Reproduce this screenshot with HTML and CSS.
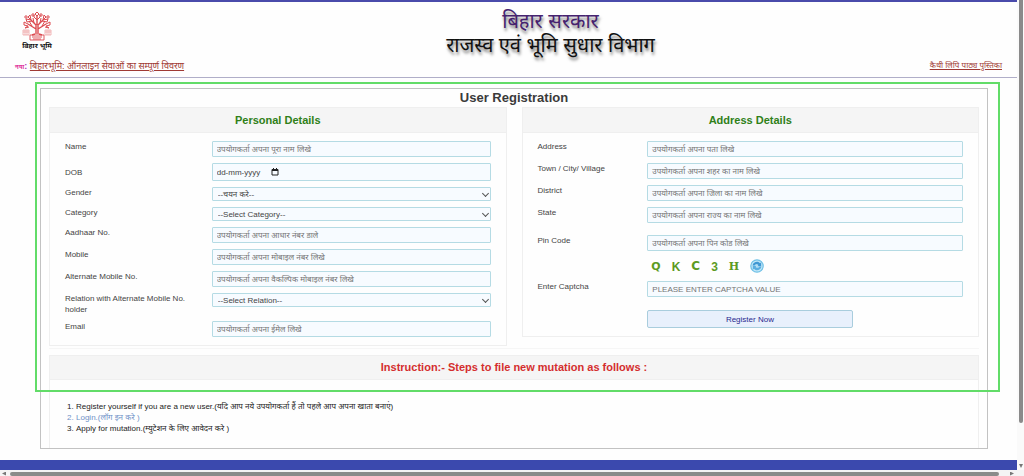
FILE: index.html
```html
<!DOCTYPE html>
<html lang="hi">
<head>
    <meta charset="UTF-8">
    <meta name="viewport" content="width=device-width, initial-scale=1.0">
    <title>बिहारभूमि - User Registration</title>
    <link rel="stylesheet" href="styles.css">
</head>
<body>
    <div class="viewport">
        <div class="page">
            <header class="header">
                <div class="logo">
                    <svg class="logo-tree" viewBox="0 0 30 30" fill="none" stroke="#dc4a50" stroke-width="1">
                        <path d="M14 23V14L9 9M16 23V14l5-5M15 14V5M14 18L6 13M16 18l8-5M13 23l-3 1M17 23l3 1" stroke-width="1.4"/>
                        <path d="M9 9L8 4l-2 2 3 3-5-1 1 3 5-1M21 9l1-5 2 2-3 3 5-1-1 3-5-1M15 5l-2-2 2-2 2 2-2 2M15 9l-3-3v-2M15 9l3-3V4M6 13l-4-2v3l4 1-3 2 4-1M24 13l4-2v3l-4 1 3 2-4-1M12 12L11 7M18 12l1-5M10 15l-3-5M20 15l3-5"/>
                        <circle cx="11" cy="4" r="1.2"/>
                        <circle cx="19" cy="4" r="1.2"/>
                        <circle cx="4" cy="6" r="1.2"/>
                        <circle cx="26" cy="6" r="1.2"/>
                        <path d="M1 19h6v5H1zM23 19h6v5h-6zM1 21h6M23 21h6M3 19v5M5 19v5M25 19v5M27 19v5" stroke="#ec9a9c" stroke-width=".7"/>
                        <path d="M8 24h14v5H8zM10 26h10M11 28h8" stroke-width=".9"/>
                    </svg>
                    <span class="logo-text">बिहार भूमि</span>
                </div>
                <div class="title">
                    <div class="title-gov">बिहार सरकार</div>
                    <div class="title-dept">राजस्व एवं भूमि सुधार विभाग</div>
                </div>
                <div class="notice">
                    <span class="new">नया</span><span class="new-colon">:</span>
                    <a href="#">बिहारभूमि: ऑनलाइन सेवाओं का सम्पूर्ण विवरण</a>
                </div>
                <a class="book" href="#">कैथी लिपि पाठ्य पुस्तिका</a>
            </header>

            <main class="main">
                <div class="highlight"></div>
                <div class="box">
                    <h1>User Registration</h1>
                    <form class="cards">
                        <section class="card">
                            <h2>Personal Details</h2>
                            <div class="fields">
                                <div class="row">
                                    <label for="name">Name</label>
                                    <input id="name" type="text" placeholder="उपयोगकर्ता अपना पूरा नाम लिखे">
                                </div>
                                <div class="row date">
                                    <label for="dob">DOB</label>
                                    <div class="date-box">
                                        <input id="dob" type="text" placeholder="dd-mm-yyyy">
                                        <button type="button" class="calendar" aria-label="Choose date">
                                            <svg viewBox="0 0 8 8"><path d="M1 1.5h6v5.5H1z" fill="none" stroke="#222"/><path d="M1 1h6v2H1zM2 0h1v1H2zM5 0h1v1H5z" fill="#222"/></svg>
                                        </button>
                                    </div>
                                </div>
                                <div class="row">
                                    <label for="gender">Gender</label>
                                    <div class="select-box"><select id="gender"><option>--चयन करे--</option></select></div>
                                </div>
                                <div class="row">
                                    <label for="category">Category</label>
                                    <div class="select-box"><select id="category"><option>--Select Category--</option></select></div>
                                </div>
                                <div class="row">
                                    <label for="aadhaar">Aadhaar No.</label>
                                    <input id="aadhaar" type="text" placeholder="उपयोगकर्ता अपना आधार नंबर डाले">
                                </div>
                                <div class="row">
                                    <label for="mobile">Mobile</label>
                                    <input id="mobile" type="text" placeholder="उपयोगकर्ता अपना मोबाइल नंबर लिखे">
                                </div>
                                <div class="row">
                                    <label for="alt-mobile">Alternate Mobile No.</label>
                                    <input id="alt-mobile" type="text" placeholder="उपयोगकर्ता अपना वैकल्पिक मोबाइल नंबर लिखे">
                                </div>
                                <div class="row">
                                    <label for="relation">Relation with Alternate Mobile No. holder</label>
                                    <div class="select-box"><select id="relation"><option>--Select Relation--</option></select></div>
                                </div>
                                <div class="row">
                                    <label for="email">Email</label>
                                    <input id="email" type="text" placeholder="उपयोगकर्ता अपना ईमेल लिखे">
                                </div>
                            </div>
                        </section>

                        <section class="card address">
                            <h2>Address Details</h2>
                            <div class="fields">
                                <div class="row">
                                    <label for="address">Address</label>
                                    <input id="address" type="text" placeholder="उपयोगकर्ता अपना पता लिखे">
                                </div>
                                <div class="row">
                                    <label for="town">Town / City/ Village</label>
                                    <input id="town" type="text" placeholder="उपयोगकर्ता अपना शहर का नाम लिखे">
                                </div>
                                <div class="row">
                                    <label for="district">District</label>
                                    <input id="district" type="text" placeholder="उपयोगकर्ता अपना जिला का नाम लिखे">
                                </div>
                                <div class="row state">
                                    <label for="state">State</label>
                                    <input id="state" type="text" placeholder="उपयोगकर्ता अपना राज्य का नाम लिखे">
                                </div>
                                <div class="row">
                                    <label for="pin">Pin Code</label>
                                    <input id="pin" type="text" placeholder="उपयोगकर्ता अपना पिन कोड लिखे">
                                </div>
                                <div class="row">
                                    <div class="captcha">
                                        <span class="thin">Q</span>
                                        <span class="low">K</span>
                                        <span class="wide">C</span>
                                        <span class="digit">3</span>
                                        <span class="serif">H</span>
                                        <button type="button" class="refresh" aria-label="Refresh captcha">
                                            <svg viewBox="0 0 14 14">
                                                <circle cx="7" cy="7" r="6.2" fill="#c4e8f8" stroke="#6fc0e6" stroke-width="1.2"/>
                                                <path d="M2.5 6.5C3 4 5 2.800 7 2.800c1.500 0 2.500.7 3 1.500l1.200-1v4H7.200l1.300-1.300C7.500 5 5.500 5 4.500 6.500z" fill="#3f97d3"/>
                                                <path d="M11.500 7.500C11 10 9 11.200 7 11.200c-1.500 0-2.500-.7-3-1.500l-1.200 1v-4h4L5.500 8c1 1 3 1 4-.5z" fill="#5aaee0"/>
                                            </svg>
                                        </button>
                                    </div>
                                </div>
                                <div class="row captcha-input">
                                    <label for="captcha">Enter Captcha</label>
                                    <input id="captcha" type="text" placeholder="PLEASE ENTER CAPTCHA VALUE">
                                </div>
                                <div class="row">
                                    <button type="submit" class="register">Register Now</button>
                                </div>
                            </div>
                        </section>
                    </form>

                    <section class="card instructions">
                        <h2>Instruction:- Steps to file new mutation as follows :</h2>
                        <ol>
                            <li>Register yourself if you are a new user.(यदि आप नये उपयोगकर्ता हैं तो पहले आप अपना खाता बनाएं)</li>
                            <li class="login"><a href="#">Login.(लॉग इन करे )</a></li>
                            <li>Apply for mutation.(म्युटेशन के लिए आवेदन करे )</li>
                        </ol>
                    </section>
                </div>
            </main>
            <footer class="footer"></footer>
        </div>
        <div class="scroll-y"><div class="thumb"></div><i class="arrow down"></i></div>
        <div class="scroll-x"><i class="arrow left"></i><div class="thumb"></div><i class="arrow right"></i></div>
    </div>
</body>
</html>
```

FILE: styles.css
```css
* {
    box-sizing: border-box;
}
body {
    margin: 0;
    background: #fefefe;
    color: #444;
    font-family: "Liberation Sans", "Noto Sans", "Noto Sans Devanagari", sans-serif;
    font-size: 8px;
    line-height: 11px;
}
h1, h2, ol {
    margin: 0;
}
.viewport {
    display: grid;
    grid-template-columns: 1fr 7px;
}

/* header */
.header {
    display: grid;
    grid-template-columns: 1fr auto 1fr;
    align-items: start;
    border-top: 2px solid #4a4bab;
    border-bottom: 1px solid #b0aec8;
    padding: 7px 15px 3px;
}
.logo {
    width: 44px;
    padding-top: 2px;
    text-align: center;
}
.logo-tree {
    display: block;
    width: 30px;
    height: 30px;
    margin: 0 auto;
}
.logo-text {
    display: block;
    color: #111;
    font-size: 7px;
    font-weight: bold;
    line-height: 9px;
    white-space: nowrap;
}
.title {
    padding-left: 84px;
    font-size: 20px;
    line-height: 24px;
    text-align: center;
    text-shadow: 1px 3px 3px rgba(0, 0, 0, 0.5);
    white-space: nowrap;
}
.title-gov {
    color: #45226f;
}
.title-dept {
    color: #111;
}
.notice {
    grid-row: 2;
    padding-top: 3px;
    font-size: 9px;
    line-height: 13px;
    white-space: nowrap;
}
.notice a, .book {
    color: #a03a34;
}
.new {
    color: #e0359c;
    font-size: 6px;
    font-style: italic;
    font-weight: bold;
}
.new-colon {
    color: #b03ac0;
    font-weight: bold;
}
.book {
    grid-row: 2;
    grid-column: 3;
    justify-self: end;
    padding-top: 3px;
    font-size: 8px;
}

/* registration box */
.main {
    position: relative;
    padding: 10px 29px 11px 40px;
}
.highlight {
    position: absolute;
    top: 4px;
    left: 35px;
    right: 17px;
    height: 310px;
    border: 2px solid #62dc68;
    pointer-events: none;
}
.box {
    border: 1px solid #c2c2c2;
    padding: 0 8px;
}
h1 {
    color: #3a3a3a;
    font-size: 13px;
    line-height: 18px;
    text-align: center;
}
.cards {
    display: grid;
    grid-template-columns: 1fr 1fr;
    gap: 15px;
    align-items: start;
    padding-bottom: 2px;
    border-bottom: 1px solid #f6f6f6;
}
.card {
    border: 1px solid #efefef;
}
.card h2 {
    background: #f5f5f5;
    border-bottom: 1px solid #efefef;
    color: #2f8018;
    font-size: 11px;
    line-height: 24px;
    text-align: center;
}
.fields {
    padding: 8px 15px 2px;
}
.row {
    display: grid;
    grid-template-columns: 10fr 19fr;
    align-items: start;
    margin-bottom: 6px;
}
.address .row {
    grid-template-columns: 8fr 23fr;
}
.address .row.state {
    margin-bottom: 12px;
}
.row.date {
    align-items: center;
}
label {
    padding-right: 20px;
}
.address label {
    padding-right: 0;
}
input, select {
    width: 100%;
    height: 16px;
    margin: 0;
    padding: 0 4px;
    border: 1px solid #b5dbe4;
    border-radius: 1px;
    background: #f7fbff;
    color: #444;
    font: inherit;
}
input::placeholder {
    color: #757575;
}
select {
    display: block;
    height: 14px;
    padding: 0 5px;
    appearance: none;
}
.select-box, .date-box {
    position: relative;
}
.select-box::after {
    content: "";
    position: absolute;
    top: 4px;
    right: 3px;
    width: 4px;
    height: 4px;
    border-right: 1px solid #555;
    border-bottom: 1px solid #555;
    transform: rotate(45deg);
    pointer-events: none;
}
.date input {
    display: block;
    height: 18px;
}
.date input::placeholder {
    color: #444;
}
.calendar {
    position: absolute;
    top: 5px;
    left: 59px;
    width: 8px;
    height: 8px;
    padding: 0;
    border: 0;
    background: none;
}
.calendar svg, .refresh svg {
    display: block;
}

/* captcha */
.captcha {
    grid-column: 2;
    display: flex;
    align-items: center;
    gap: 11px;
    height: 18px;
    padding-left: 4px;
    color: #5c9a22;
    font-size: 12px;
    font-weight: bold;
}
.captcha .thin {
    font-family: "DejaVu Sans", sans-serif;
    font-size: 11px;
}
.captcha .low {
    padding-top: 3px;
}
.captcha .wide {
    font-family: "DejaVu Sans", sans-serif;
}
.captcha .digit {
    padding-top: 2px;
}
.captcha .serif {
    font-family: "DejaVu Serif", serif;
    font-size: 11px;
}
.refresh {
    width: 14px;
    height: 14px;
    padding: 0;
    border: 0;
    background: none;
}
.row.captcha-input {
    margin-bottom: 13px;
}
.register {
    grid-column: 2;
    width: 65%;
    height: 18px;
    padding: 0;
    border: 1px solid #a9cddd;
    border-radius: 2px;
    background: #e8f0fc;
    color: #29298f;
    font: inherit;
}

/* instructions */
.instructions {
    margin-top: 6px;
    border-bottom: 0;
}
.instructions h2 {
    color: #d42e2e;
    line-height: 23px;
}
ol {
    padding: 21px 0 14px 26px;
    color: #222;
    line-height: 11px;
}
.login, .login a {
    color: #6f92c8;
    text-decoration: none;
}
.footer {
    height: 10px;
    background: #3b49ae;
}

/* scrollbars */
.scroll-y {
    position: relative;
    padding-left: 2px;
    background: #fafafa;
}
.scroll-y .thumb {
    width: 4px;
    height: 90%;
    border-radius: 0 0 2px 2px;
    background: #8a8a8a;
}
.scroll-x {
    grid-column: 1 / 3;
    display: flex;
    align-items: center;
    gap: 4px;
    height: 6px;
    padding: 1px 10px 0 2px;
    background: #f4f4f4;
}
.scroll-x .thumb {
    flex: 1;
    height: 4px;
    border-radius: 2px;
    background: #8a8c8a;
}
.arrow {
    width: 4px;
    height: 4px;
    background: #777;
}
.left {
    clip-path: polygon(100% 0, 100% 100%, 0 50%);
}
.right {
    margin-left: 7px;
    clip-path: polygon(0 0, 0 100%, 100% 50%);
}
.down {
    position: absolute;
    left: 2px;
    bottom: 2px;
    clip-path: polygon(0 0, 100% 0, 50% 100%);
}
```
